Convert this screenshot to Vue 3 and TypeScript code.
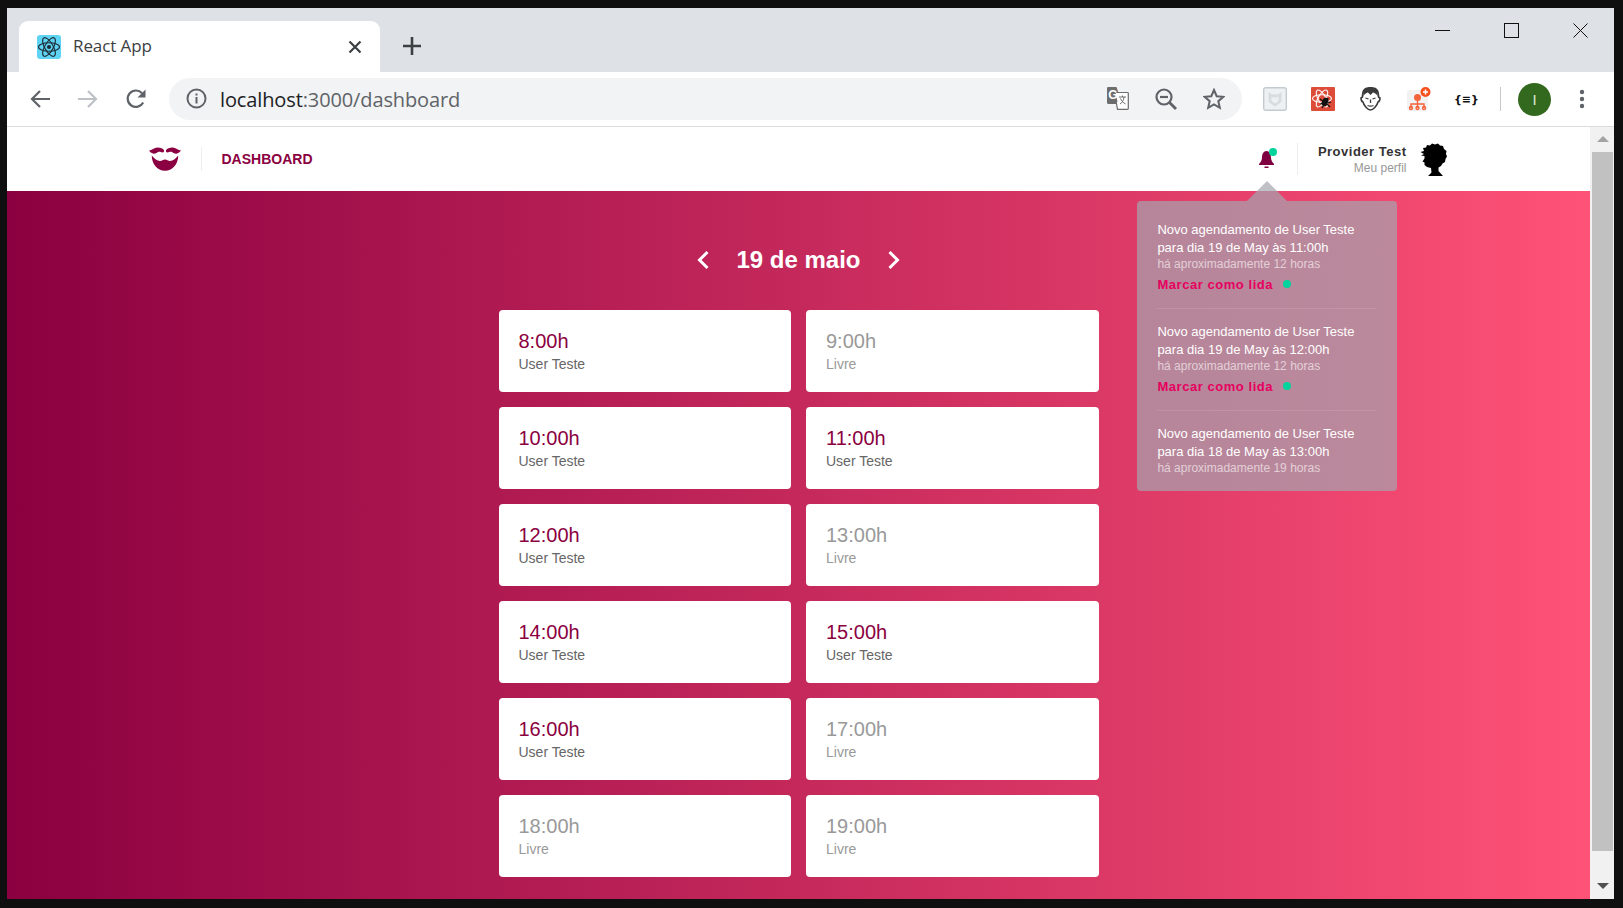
<script setup lang="ts">
type Slot = { time: string; user: string | null }
type Notice = { id: number; text: string; when: string; unread: boolean }

const slots: Slot[] = [
    { time: '8:00h', user: 'User Teste' },
    { time: '9:00h', user: null },
    { time: '10:00h', user: 'User Teste' },
    { time: '11:00h', user: 'User Teste' },
    { time: '12:00h', user: 'User Teste' },
    { time: '13:00h', user: null },
    { time: '14:00h', user: 'User Teste' },
    { time: '15:00h', user: 'User Teste' },
    { time: '16:00h', user: 'User Teste' },
    { time: '17:00h', user: null },
    { time: '18:00h', user: null },
    { time: '19:00h', user: null },
]

const notices: Notice[] = [
    { id: 1, text: 'Novo agendamento de User Teste para dia 19 de May às 11:00h', when: 'há aproximadamente 12 horas', unread: true },
    { id: 2, text: 'Novo agendamento de User Teste para dia 19 de May às 12:00h', when: 'há aproximadamente 12 horas', unread: true },
    { id: 3, text: 'Novo agendamento de User Teste para dia 18 de May às 13:00h', when: 'há aproximadamente 19 horas', unread: false },
]
</script>

<template>
    <div id="frame">
        <div id="window">
            <div id="tab-strip">
                <div id="tab">
                    <svg class="favicon" width="24" height="24" viewBox="0 0 24 24">
                        <rect width="24" height="24" rx="3" fill="#5ed3f3" />
                        <g fill="none" stroke="#1c2b33" stroke-width="1.1">
                            <ellipse cx="12" cy="12" rx="10.5" ry="4.2" />
                            <ellipse cx="12" cy="12" rx="10.5" ry="4.2" transform="rotate(60 12 12)" />
                            <ellipse cx="12" cy="12" rx="10.5" ry="4.2" transform="rotate(120 12 12)" />
                        </g>
                        <circle cx="12" cy="12" r="2.1" fill="#1c2b33" />
                    </svg>
                    <span id="tab-title">React App</span>
                    <svg class="tab-close" width="14" height="14" viewBox="0 0 14 14">
                        <path d="M1.5 1.5l11 11M12.5 1.5l-11 11" stroke="#3c4043" stroke-width="2.2" fill="none" />
                    </svg>
                </div>
                <svg class="new-tab" width="18" height="18" viewBox="0 0 18 18">
                    <path d="M9 0v18M0 9h18" stroke="#3c4043" stroke-width="2.6" fill="none" />
                </svg>
                <div id="window-controls">
                    <svg width="15" height="15" viewBox="0 0 15 15"><path d="M0 7.5h15" stroke="#111" fill="none" /></svg>
                    <svg width="15" height="15" viewBox="0 0 15 15"><rect x=".5" y=".5" width="14" height="14" stroke="#111" fill="none" /></svg>
                    <svg width="15" height="15" viewBox="0 0 15 15"><path d="M.5.5l14 14M14.5.5l-14 14" stroke="#111" fill="none" /></svg>
                </div>
            </div>

            <div id="toolbar">
                <div id="nav-buttons">
                    <svg width="22" height="20" viewBox="0 0 22 20"><path d="M21 10H3M11 2l-8 8 8 8" stroke="#5f6368" stroke-width="2.2" fill="none" /></svg>
                    <svg width="22" height="20" viewBox="0 0 22 20"><path d="M1 10h18M11 2l8 8-8 8" stroke="#bdc1c6" stroke-width="2.2" fill="none" /></svg>
                    <svg width="22" height="22" viewBox="0 0 22 22">
                        <path d="M18.2 14.5A8.2 8.2 0 1 1 17 5.2" stroke="#5f6368" stroke-width="2.2" fill="none" />
                        <path d="M20.5 1.5v8h-8z" fill="#5f6368" />
                    </svg>
                </div>
                <div id="omnibox">
                    <svg width="21" height="21" viewBox="0 0 21 21">
                        <circle cx="10.5" cy="10.5" r="9" fill="none" stroke="#5f6368" stroke-width="2" />
                        <rect x="9.5" y="9" width="2" height="6.5" fill="#5f6368" />
                        <rect x="9.5" y="5.5" width="2" height="2" fill="#5f6368" />
                    </svg>
                    <span id="url"><b>localhost</b>:3000/dashboard</span>
                    <div id="omni-icons">
                        <svg width="22" height="23" viewBox="0 0 22 23">
                            <path d="M1.5 0h8l2 6H14v11H1.500A1.500 1.500 0 0 1 0 15.500v-14A1.500 1.500 0 0 1 1.500 0z" fill="#6d6d6d" />
                            <path d="M7.500 5.500H20.500a.8.8 0 0 1 .8.8V21.500a.8.8 0 0 1-.8.8H10.500z" fill="#fff" stroke="#6d6d6d" stroke-width="1.200" />
                            <path d="M1.500 0h6l3 15H1.500A1.500 1.500 0 0 1 0 13.500v-12A1.500 1.500 0 0 1 1.500 0z" fill="#6d6d6d" />
                            <text x="1.300" y="12" class="g-letter">G</text>
                            <path d="M12 10h7M15.500 8.500v1.500M13 17c2.500-1.500 3.500-3.500 4-7M13.500 11.500c1 2.500 2.500 4 5 5.500" stroke="#6d6d6d" fill="none" />
                        </svg>
                        <svg width="22" height="22" viewBox="0 0 22 22">
                            <circle cx="9" cy="9" r="7.500" fill="none" stroke="#5f6368" stroke-width="2.200" />
                            <path d="M5 9h8" stroke="#5f6368" stroke-width="2.200" />
                            <path d="M14.500 14.500l6.500 6.500" stroke="#5f6368" stroke-width="2.800" />
                        </svg>
                        <svg width="22" height="22" viewBox="0 0 22 22">
                            <path d="M11 2l2.700 6.200 6.600.6-5 4.400 1.500 6.600L11 16.300l-5.800 3.500 1.500-6.600-5-4.400 6.600-.6z" fill="none" stroke="#5f6368" stroke-width="2" />
                        </svg>
                    </div>
                </div>
                <div id="extensions">
                    <svg width="24" height="24" viewBox="0 0 24 24">
                        <rect x=".7" y=".7" width="22.600" height="22.600" rx="2" fill="#eef1f3" stroke="#c4cbd0" stroke-width="1.400" />
                        <path d="M5.500 5l3.500 2.500h6L18.500 5v10L12 19.500 5.500 15z" fill="#d6dcdf" />
                        <path d="M8.500 9.500l2 1h3l2-1v4.500L12 16.500 8.500 14z" fill="#eef1f3" />
                    </svg>
                    <svg width="24" height="24" viewBox="0 0 24 24">
                        <rect width="24" height="24" rx="1" fill="#dd4b39" />
                        <g fill="none" stroke="#fff" stroke-width="1.100">
                            <ellipse cx="11" cy="11.500" rx="9.500" ry="3.800" />
                            <ellipse cx="11" cy="11.500" rx="9.500" ry="3.800" transform="rotate(60 11 11.500)" />
                            <ellipse cx="11" cy="11.500" rx="9.500" ry="3.800" transform="rotate(120 11 11.500)" />
                        </g>
                        <ellipse cx="14" cy="15" rx="3" ry="4.500" fill="#111" transform="rotate(25 14 15)" />
                        <path d="M9 12l3 2M9 17l3-1M17 11l-1 3M20 15l-3 1M19 20l-3-3M11 21l2-3" stroke="#111" stroke-width="1.200" />
                    </svg>
                    <svg class="face-ext" width="21" height="24" viewBox="0 0 21 24">
                        <path d="M4 3c2-3 11-3 13 0 1.500 2 1.500 5 1.500 7l1.500 1c0 2-.5 3.500-2 4-1 4-5 8-7.500 8S4 19 3 15c-1.500-.5-2-2-2-4l1.500-1c0-2 0-5 1.500-7z" fill="#fff" stroke="#3b3b3b" stroke-width="1.600" />
                        <path d="M3.500 9c1-2 3.500-3.500 4.500-3.500l2.500 2.500L13 5.500c1 0 3.500 1.500 4.500 3.500.5-3.500 0-6-1.500-7.500-2-1-9-1-11 0C3.500 3 3 5.500 3.500 9z" fill="#3b3b3b" />
                        <path d="M5.500 11l3 1M15.500 11l-3 1M10.500 12.500v3.500M7.500 18.500c1.800.8 4.200.8 6 0" stroke="#3b3b3b" stroke-width="1.300" fill="none" />
                    </svg>
                    <svg class="org-ext" width="24" height="24" viewBox="0 0 24 24">
                        <rect y="3" width="21" height="21" rx="3" fill="#f2f2f2" />
                        <circle cx="10.500" cy="10.500" r="3.500" fill="#f4623a" />
                        <path d="M10.500 14v3M4 21v-4h13v4M10.500 17v4" stroke="#f4623a" stroke-width="1.400" fill="none" />
                        <g fill="none" stroke="#f4623a" stroke-width="1.400">
                            <circle cx="4" cy="21" r="1.500" />
                            <circle cx="10.500" cy="21" r="1.500" />
                            <circle cx="17" cy="21" r="1.500" />
                        </g>
                        <circle cx="18.500" cy="5" r="5" fill="#f4511e" />
                        <path d="M18.500 2.500v5M16 5h5" stroke="#fff" stroke-width="1.500" />
                    </svg>
                    <span id="json-ext">{≡}</span>
                </div>
                <div id="toolbar-divider"></div>
                <div id="profile-circle">I</div>
                <svg class="kebab" width="6" height="20" viewBox="0 0 6 20">
                    <circle cx="3" cy="3" r="2.200" fill="#5f6368" />
                    <circle cx="3" cy="10" r="2.200" fill="#5f6368" />
                    <circle cx="3" cy="17" r="2.200" fill="#5f6368" />
                </svg>
            </div>

            <div id="viewport">
                <div id="page">
                    <header id="app-header">
                        <div id="header-inner">
                            <nav id="brand">
                                <svg width="32" height="24" viewBox="0 0 32 24">
                                    <path d="M0 3.500C3 3.500 5 .5 8.500.5c3 0 5.500.8 6.500 2.700.3 1.300-.5 2.300-1.500 2.300-1.500 0-2.500-1-4.500-.5-2 1.500-3.500 2-5 1.500C2.500 6 1 5 0 3.500z" fill="#8b0040" />
                                    <path d="M32 3.500C29 3.500 27 .5 23.500.5c-3 0-5.500.8-6.500 2.700-.3 1.300.5 2.300 1.500 2.300 1.500 0 2.500-1 4.500-.5 2 1.500 3.500 2 5 1.500C29.500 6 31 5 32 3.500z" fill="#8b0040" />
                                    <path d="M2.800 8.500C5.500 11.500 8 14 11 14c2 0 3-1.500 5-1.500s3 1.500 5 1.500c3 0 5.500-2.500 8.200-5.500C29.500 16 24 23.800 16 23.800S2.500 16 2.800 8.500z" fill="#8b0040" />
                                </svg>
                                <a id="dashboard-link">DASHBOARD</a>
                            </nav>
                            <aside id="account">
                                <div id="bell">
                                    <svg width="15" height="17" viewBox="0 0 15 17">
                                        <path d="M7.500 0C10.500 0 12 3 12 6.500c0 3 1.500 5 3 6.500v1H0v-1c1.500-1.500 3-3.500 3-6.500C3 3 4.500 0 7.500 0z" fill="#7f0040" />
                                        <path d="M5.500 15.500h4v1.500h-4z" fill="#7f0040" />
                                    </svg>
                                    <span id="bell-badge"></span>
                                    <div id="notices">
                                        <div v-for="notice in notices" :key="notice.id" class="notice">
                                            <p class="notice-text">{{ notice.text }}</p>
                                            <time class="notice-when">{{ notice.when }}</time>
                                            <div v-if="notice.unread" class="notice-action">
                                                <button>Marcar como lida</button>
                                                <span class="unread-dot"></span>
                                            </div>
                                        </div>
                                    </div>
                                </div>
                                <div id="profile">
                                    <div id="profile-text">
                                        <strong>Provider Test</strong>
                                        <a>Meu perfil</a>
                                    </div>
                                    <svg width="28" height="33" viewBox="0 0 28 33">
                                        <path d="M8 24 5.500 22 5.500 19.500 3.500 18.500 5.500 15.500 5.500 13 2 12.500 5 11 1.500 9 5 8 4 5 7 4.500 8 2 11 2.500 13 .5 16 1.500 19 .5 21 2.500 24 3 25 6 27.500 8 27 11 28 13.500 26.500 16 26 19 23.500 20.500 22 23 19.500 24.500 19.500 28 24 33H9L12.500 29.500 12 25z" fill="#000" />
                                    </svg>
                                </div>
                            </aside>
                        </div>
                    </header>

                    <main id="schedule">
                        <div id="date-nav">
                            <svg width="12" height="20" viewBox="0 0 12 20"><path d="M10.500 2L2.500 10l8 8" stroke="#fff" stroke-width="3" fill="none" /></svg>
                            <h1>19 de maio</h1>
                            <svg width="12" height="20" viewBox="0 0 12 20"><path d="M1.500 2l8 8-8 8" stroke="#fff" stroke-width="3" fill="none" /></svg>
                        </div>
                        <ul id="slots">
                            <li v-for="slot in slots" :key="slot.time" class="slot" :class="{ free: !slot.user }">
                                <strong>{{ slot.time }}</strong>
                                <span>{{ slot.user ?? 'Livre' }}</span>
                            </li>
                        </ul>
                    </main>
                </div>

                <div id="scrollbar">
                    <span id="arrow-up"></span>
                    <div id="thumb"></div>
                    <span id="arrow-down"></span>
                </div>
            </div>
        </div>
    </div>
</template>

<style scoped>
#frame {
    width: 1623px;
    height: 908px;
    box-sizing: border-box;
    padding: 8px 9px 9px 7px;
    background-color: #0f0f0f;
    overflow: hidden;
    font-family: "Liberation Sans", Arial, sans-serif;
}

#window {
    height: 100%;
    display: flex;
    flex-flow: column nowrap;
    background-color: #fff;
}

#tab-strip {
    height: 64px;
    flex: none;
    display: flex;
    background-color: #dee1e6;
}

#tab {
    width: 361px;
    height: 51px;
    margin: 13px 0 0 12px;
    box-sizing: border-box;
    padding: 0 18px;
    display: flex;
    align-items: center;
    background-color: #fff;
    border-radius: 9px 9px 0 0;
}

.favicon {
    flex: none;
}

#tab-title {
    margin-left: 12px;
    margin-top: -2px;
    font-family: "Open Sans", sans-serif;
    font-size: 17px;
    letter-spacing: -0.1px;
    color: #3c4043;
}

.tab-close {
    margin-left: auto;
    margin-top: 1px;
}

.new-tab {
    margin: 29px 0 0 23px;
}

#window-controls {
    margin-left: auto;
    padding: 15px 26px 0 0;
    display: flex;
    gap: 54px;
    align-items: flex-start;
}

#toolbar {
    height: 55px;
    flex: none;
    box-sizing: border-box;
    border-bottom: 1px solid #dadce0;
    display: flex;
    align-items: center;
}

#nav-buttons {
    width: 162px;
    flex: none;
    box-sizing: border-box;
    padding: 0 0 0 22px;
    display: flex;
    align-items: center;
    gap: 26px;
}

#omnibox {
    width: 1073px;
    height: 42px;
    margin-top: -1px;
    flex: none;
    box-sizing: border-box;
    padding: 0 17px 0 17px;
    display: flex;
    align-items: center;
    background-color: #f1f3f4;
    border-radius: 21px;
}

#url {
    margin-left: 13px;
    margin-top: 2px;
    font-family: "Open Sans", sans-serif;
    font-size: 20px;
    letter-spacing: -0.12px;
    color: #5f6368;
}

#url b {
    font-weight: 400;
    color: #202124;
}

#omni-icons {
    margin-left: auto;
    display: flex;
    align-items: center;
    gap: 26px;
}

.g-letter {
    font-family: "Liberation Sans", sans-serif;
    font-size: 12px;
    font-weight: 700;
    fill: #fff;
}

#extensions {
    margin-left: 21px;
    display: flex;
    align-items: center;
    gap: 24px;
}

.face-ext {
    margin-left: 1px;
}

.org-ext {
    margin-left: 2px;
}

#json-ext {
    width: 19px;
    margin-left: -1px;
    font-family: "DejaVu Sans", sans-serif;
    font-size: 11px;
    font-weight: 700;
    white-space: nowrap;
    color: #111;
}

#toolbar-divider {
    width: 1px;
    height: 24px;
    margin-left: 27px;
    background-color: #c8c8c8;
}

#profile-circle {
    width: 33px;
    height: 33px;
    margin-left: 17px;
    border-radius: 50%;
    display: flex;
    justify-content: center;
    align-items: center;
    background-color: #33691e;
    color: #dfe8da;
    font-size: 15px;
}

.kebab {
    margin-left: 28px;
}

#viewport {
    flex: 1;
    min-height: 0;
    display: flex;
}

#page {
    flex: 1;
    min-width: 0;
    overflow: hidden;
    display: flex;
    flex-flow: column nowrap;
    background: linear-gradient(-90deg, #ff5277, #8b0040);
}

#app-header {
    height: 64px;
    flex: none;
    background-color: #fff;
}

#header-inner {
    max-width: 1300px;
    height: 100%;
    margin: 0 auto;
    display: flex;
    justify-content: space-between;
    align-items: center;
}

#brand {
    display: flex;
    align-items: center;
}

#brand svg {
    padding-right: 20px;
    margin-right: 20px;
    border-right: 1px solid #eee;
}

#dashboard-link {
    font-size: 14px;
    font-weight: 700;
    color: #8b0040;
}

#account {
    display: flex;
    align-items: center;
    margin-right: 2px;
}

#bell {
    position: relative;
    height: 24px;
    display: flex;
    align-items: center;
    margin-right: 23px;
}

#bell-badge {
    position: absolute;
    top: 1px;
    right: -3px;
    width: 8px;
    height: 8px;
    border-radius: 50%;
    background-color: #00d39b;
}

#notices {
    position: absolute;
    top: calc(100% + 30px);
    left: calc(50% - 129px);
    width: 260px;
    box-sizing: border-box;
    padding: 6px 20px 0;
    background-color: rgba(165, 165, 175, 0.7);
    border-radius: 4px;
    z-index: 2;
}

#notices::before {
    content: "";
    position: absolute;
    top: -20px;
    left: calc(50% - 20px);
    width: 0;
    height: 0;
    border-left: 20px solid transparent;
    border-right: 20px solid transparent;
    border-bottom: 20px solid rgba(165, 165, 175, 0.7);
}

.notice {
    padding: 14px 0 16px;
    color: #fff;
}

.notice:last-child {
    padding-bottom: 15px;
}

.notice + .notice {
    border-top: 1px solid rgba(255, 255, 255, 0.1);
}

.notice-text {
    margin: 0;
    font-size: 13px;
    line-height: 18px;
}

.notice-when {
    display: block;
    margin-top: -1px;
    font-size: 12px;
    line-height: 16px;
    opacity: 0.6;
}

.notice-action {
    margin-top: 4px;
    height: 16px;
    display: flex;
    align-items: center;
}

.notice-action button {
    padding: 0;
    border: none;
    background: none;
    font-family: inherit;
    font-size: 13px;
    font-weight: 700;
    letter-spacing: 0.55px;
    color: #e6005f;
}

.unread-dot {
    width: 8px;
    height: 8px;
    margin-left: 10px;
    border-radius: 50%;
    background-color: #00d39b;
}

#profile {
    height: 32px;
    padding-left: 20px;
    border-left: 1px solid #eee;
    display: flex;
    align-items: center;
}

#profile-text {
    display: flex;
    flex-flow: column nowrap;
    align-items: flex-end;
    margin-right: 12px;
}

#profile-text strong {
    font-size: 13px;
    line-height: 16px;
    letter-spacing: 0.5px;
    color: #333;
}

#profile-text a {
    margin-top: 1px;
    font-size: 12px;
    line-height: 14px;
    color: #999;
}

#schedule {
    width: 600px;
    margin: 0 auto;
    padding: 50px 0 22px;
}

#date-nav {
    height: 38px;
    margin-bottom: 31px;
    display: flex;
    justify-content: center;
    align-items: center;
    gap: 27px;
}

#date-nav h1 {
    margin: 0;
    font-size: 24px;
    font-weight: 700;
    color: #fff;
}

#slots {
    margin: 0;
    padding: 0;
    list-style: none;
    display: grid;
    grid-template-columns: 1fr 1fr;
    gap: 15px;
}

.slot {
    height: 82px;
    box-sizing: border-box;
    padding: 19px 20px;
    display: flex;
    flex-flow: column nowrap;
    background-color: #fff;
    border-radius: 4px;
}

.slot strong {
    font-size: 20px;
    font-weight: 400;
    line-height: 24px;
    color: #8b0040;
}

.slot span {
    font-size: 14px;
    line-height: 22px;
    color: #666;
}

.slot.free strong,
.slot.free span {
    color: #999;
}

#scrollbar {
    width: 24px;
    flex: none;
    box-sizing: border-box;
    padding: 25px 1px 0 2px;
    position: relative;
    background-color: #f1f1f1;
}

#thumb {
    height: 699px;
    background-color: #c1c1c1;
}

#arrow-up,
#arrow-down {
    position: absolute;
    left: 7px;
    width: 0;
    height: 0;
    border-left: 6px solid transparent;
    border-right: 6px solid transparent;
}

#arrow-up {
    top: 9px;
    border-bottom: 6px solid #a3a3a3;
}

#arrow-down {
    bottom: 10px;
    border-top: 6px solid #505050;
}
</style>
